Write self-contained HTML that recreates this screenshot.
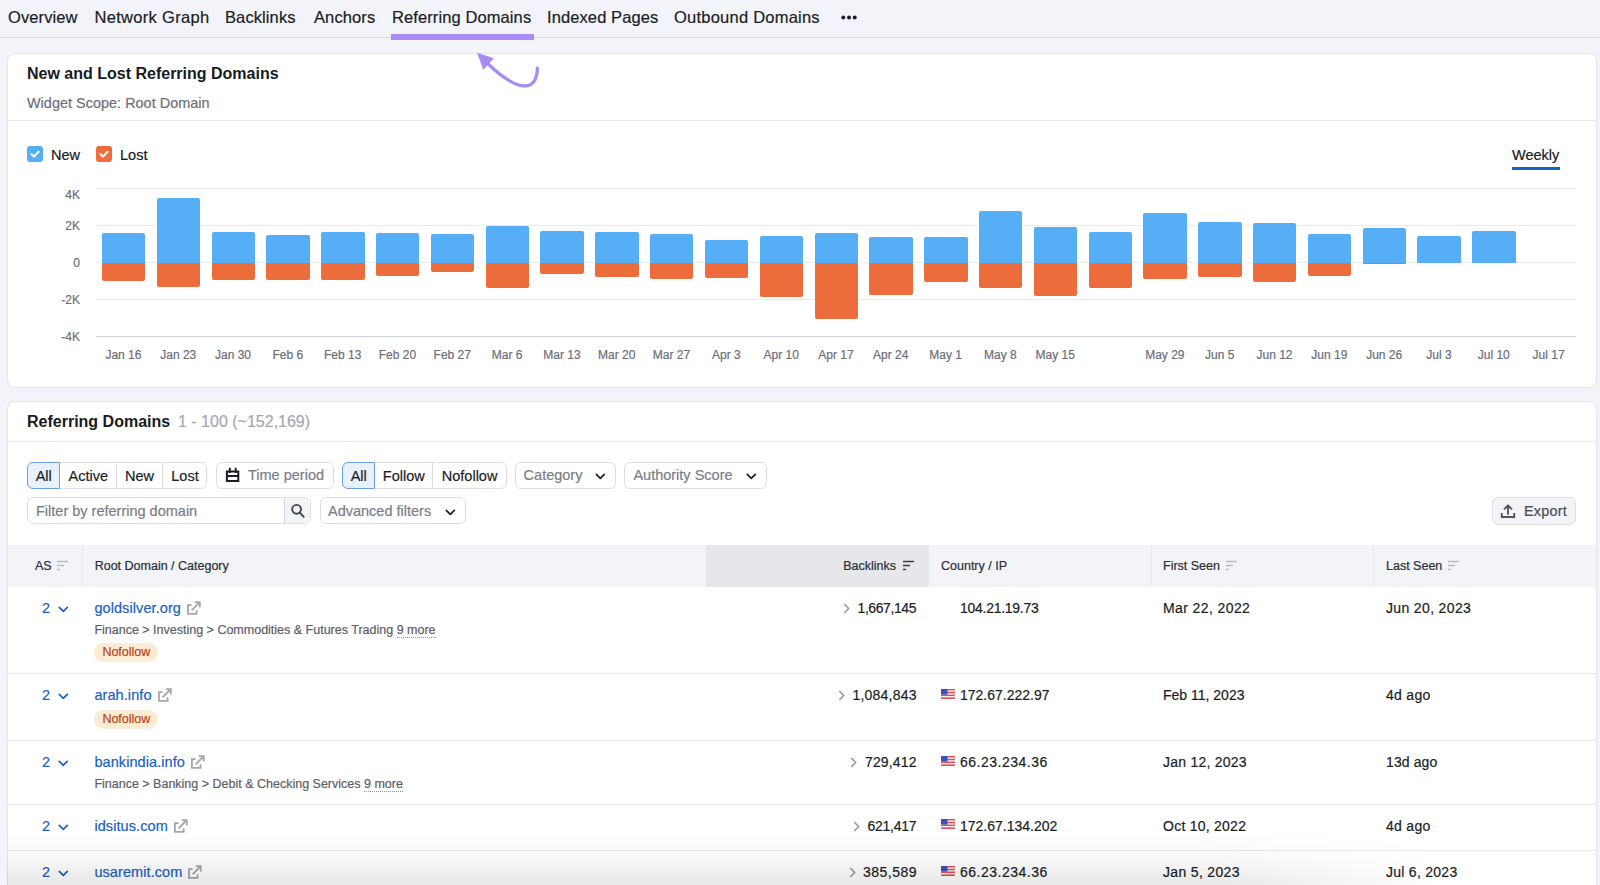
<!DOCTYPE html>
<html><head><meta charset="utf-8">
<style>
*{box-sizing:border-box;margin:0;padding:0}
body{-webkit-text-stroke:0.2px currentColor}html,body{width:1600px;height:885px;overflow:hidden;background:#f3f4f9;font-family:"Liberation Sans",sans-serif;color:#171a22}
.a{position:absolute;white-space:nowrap}
.nav{font-size:16.5px;line-height:20px;top:7px;color:#1b1d24;letter-spacing:0.1px}
.card{position:absolute;background:#fff;border:1px solid #e4e6eb;border-radius:8px}
.ax{font-size:12px;line-height:14px;color:#6c6e79}
.xl{font-size:12px;line-height:14px;color:#6c6e79;text-align:center;width:60px}
.bar{position:absolute;width:43.4px}
.b{background:#56aef6;border-radius:2px 2px 0 0}
.o{background:#ec6c3c;border-radius:0 0 2px 2px}
.grid{position:absolute;left:96px;width:1480px;height:1px;background:#e8eaee}
.btn{position:absolute;height:27px;border:1px solid #dcdee3;border-radius:6px;background:#fff}
.t14{font-size:14px;line-height:17px}
.grey{color:#6c6e79}
.th{font-size:12.5px;line-height:15px;color:#2a2d36;top:559px}
.td{font-size:14px;line-height:17px;color:#1b1d24}
.lnk{font-size:14.5px;line-height:17px;color:#1a5fc4;letter-spacing:0.08px}
.cat{font-size:12.5px;line-height:15px;color:#5b5e68}
.badge{position:absolute;height:19px;border-radius:10px;background:#fdebd3;color:#b8431a;font-size:12.5px;line-height:19px;padding:0 8px}
.rowb{position:absolute;left:7px;width:1590px;height:1px;background:#e6e8ec}
</style></head><body>

<!-- NAV -->
<div class="a nav" style="left:8px">Overview</div>
<div class="a nav" style="left:94.5px;letter-spacing:0.3px">Network Graph</div>
<div class="a nav" style="left:225px">Backlinks</div>
<div class="a nav" style="left:314px">Anchors</div>
<div class="a nav" style="left:392px">Referring Domains</div>
<div class="a nav" style="left:547px">Indexed Pages</div>
<div class="a nav" style="left:674px;letter-spacing:0.23px">Outbound Domains</div>
<div class="a" style="left:841px;top:15px;width:16px;height:5px">
  <svg width="16" height="5" viewBox="0 0 16 5" style="display:block"><circle cx="2.3" cy="2.5" r="2" fill="#1b1d24"/><circle cx="8" cy="2.5" r="2" fill="#1b1d24"/><circle cx="13.7" cy="2.5" r="2" fill="#1b1d24"/></svg>
</div>
<div class="a" style="left:0;top:37px;width:1600px;height:1px;background:#d9dbe1"></div>
<div class="a" style="left:391px;top:34px;width:143px;height:6px;background:#a88bf5"></div>

<!-- CARD 1 -->
<div class="card" style="left:6.5px;top:53px;width:1590.5px;height:335px"></div>
<div class="a" style="left:27px;top:64px;font-size:16px;line-height:19px;font-weight:700;-webkit-text-stroke:0">New and Lost Referring Domains</div>
<div class="a t14 grey" style="left:27px;top:95px;font-size:14.4px;letter-spacing:0.04px">Widget Scope: Root Domain</div>
<div class="a" style="left:8px;top:120px;width:1588px;height:1px;background:#e8eaee"></div>

<!-- arrow -->
<svg class="a" style="left:470px;top:48px" width="80" height="45" viewBox="0 0 80 45">
  <path d="M67.4 18.8 C 67.5 46, 47 44, 16 14" stroke="#a88bf5" stroke-width="3.2" fill="none"/>
  <path d="M7 4.7 L24 10.2 L13.3 21.7 Z" fill="#a88bf5"/>
</svg>

<!-- legend -->
<div class="a" style="left:27px;top:146px;width:16px;height:16px;border-radius:3px;background:#56aef6"></div>
<svg class="a" style="left:27px;top:146px" width="16" height="16"><path d="M4.5 8.2 L7 10.6 L11.6 5.8" stroke="#fff" stroke-width="2" fill="none" stroke-linecap="round" stroke-linejoin="round"/></svg>
<div class="a t14" style="left:51px;top:147px;font-size:14.5px">New</div>
<div class="a" style="left:96px;top:146px;width:16px;height:16px;border-radius:3px;background:#ee6c3d"></div>
<svg class="a" style="left:96px;top:146px" width="16" height="16"><path d="M4.5 8.2 L7 10.6 L11.6 5.8" stroke="#fff" stroke-width="2" fill="none" stroke-linecap="round" stroke-linejoin="round"/></svg>
<div class="a t14" style="left:120px;top:147px;font-size:14.5px">Lost</div>

<div class="a t14" style="left:1512px;top:147px;font-size:14.5px">Weekly</div>
<div class="a" style="left:1512px;top:167px;width:48px;height:3px;background:#1b62c4"></div>

<!-- CHART -->
<div class="grid" style="top:188.0px;background:#e9ebee"></div>
<div class="grid" style="top:225.0px;background:#e9ebee"></div>
<div class="grid" style="top:262.0px;background:#e9ebee"></div>
<div class="grid" style="top:299.0px;background:#e9ebee"></div>
<div class="grid" style="top:336.0px;background:#d0d3d9"></div>
<div class="a ax" style="right:1520px;top:187.6px">4K</div>
<div class="a ax" style="right:1520px;top:219px">2K</div>
<div class="a ax" style="right:1520px;top:255.8px">0</div>
<div class="a ax" style="right:1520px;top:293px">-2K</div>
<div class="a ax" style="right:1520px;top:330px">-4K</div>
<div class="bar b" style="left:101.9px;top:233.25px;height:29.25px"></div>
<div class="bar o" style="left:101.9px;top:262.5px;height:18.0px"></div>
<div class="bar b" style="left:156.72px;top:198px;height:64.5px"></div>
<div class="bar o" style="left:156.72px;top:262.5px;height:24.25px"></div>
<div class="bar b" style="left:211.53px;top:232.25px;height:30.25px"></div>
<div class="bar o" style="left:211.53px;top:262.5px;height:17.0px"></div>
<div class="bar b" style="left:266.35px;top:235px;height:27.5px"></div>
<div class="bar o" style="left:266.35px;top:262.5px;height:17.0px"></div>
<div class="bar b" style="left:321.16px;top:232px;height:30.5px"></div>
<div class="bar o" style="left:321.16px;top:262.5px;height:17.75px"></div>
<div class="bar b" style="left:375.98px;top:233.25px;height:29.25px"></div>
<div class="bar o" style="left:375.98px;top:262.5px;height:13.5px"></div>
<div class="bar b" style="left:430.79px;top:234px;height:28.5px"></div>
<div class="bar o" style="left:430.79px;top:262.5px;height:9.25px"></div>
<div class="bar b" style="left:485.61px;top:226px;height:36.5px"></div>
<div class="bar o" style="left:485.61px;top:262.5px;height:25.25px"></div>
<div class="bar b" style="left:540.42px;top:231.25px;height:31.25px"></div>
<div class="bar o" style="left:540.42px;top:262.5px;height:11.25px"></div>
<div class="bar b" style="left:595.24px;top:232px;height:30.5px"></div>
<div class="bar o" style="left:595.24px;top:262.5px;height:14.25px"></div>
<div class="bar b" style="left:650.05px;top:233.75px;height:28.75px"></div>
<div class="bar o" style="left:650.05px;top:262.5px;height:16.25px"></div>
<div class="bar b" style="left:704.86px;top:240.25px;height:22.25px"></div>
<div class="bar o" style="left:704.86px;top:262.5px;height:15.25px"></div>
<div class="bar b" style="left:759.68px;top:235.75px;height:26.75px"></div>
<div class="bar o" style="left:759.68px;top:262.5px;height:34.75px"></div>
<div class="bar b" style="left:814.5px;top:232.5px;height:30.0px"></div>
<div class="bar o" style="left:814.5px;top:262.5px;height:56.0px"></div>
<div class="bar b" style="left:869.31px;top:237px;height:25.5px"></div>
<div class="bar o" style="left:869.31px;top:262.5px;height:32.0px"></div>
<div class="bar b" style="left:924.12px;top:237px;height:25.5px"></div>
<div class="bar o" style="left:924.12px;top:262.5px;height:19.75px"></div>
<div class="bar b" style="left:978.94px;top:211.25px;height:51.25px"></div>
<div class="bar o" style="left:978.94px;top:262.5px;height:25.75px"></div>
<div class="bar b" style="left:1033.76px;top:227.25px;height:35.25px"></div>
<div class="bar o" style="left:1033.76px;top:262.5px;height:33.0px"></div>
<div class="bar b" style="left:1088.57px;top:231.75px;height:30.75px"></div>
<div class="bar o" style="left:1088.57px;top:262.5px;height:25.0px"></div>
<div class="bar b" style="left:1143.38px;top:213px;height:49.5px"></div>
<div class="bar o" style="left:1143.38px;top:262.5px;height:16.25px"></div>
<div class="bar b" style="left:1198.2px;top:222.25px;height:40.25px"></div>
<div class="bar o" style="left:1198.2px;top:262.5px;height:14.75px"></div>
<div class="bar b" style="left:1253.02px;top:222.75px;height:39.75px"></div>
<div class="bar o" style="left:1253.02px;top:262.5px;height:19.75px"></div>
<div class="bar b" style="left:1307.83px;top:233.5px;height:29.0px"></div>
<div class="bar o" style="left:1307.83px;top:262.5px;height:13.75px"></div>
<div class="bar b" style="left:1362.64px;top:227.5px;height:35.0px"></div>
<div class="bar o" style="left:1362.64px;top:262.5px;height:0.75px"></div>
<div class="bar b" style="left:1417.46px;top:235.5px;height:27.0px"></div>
<div class="bar b" style="left:1472.28px;top:231.25px;height:31.25px"></div>
<div class="a xl" style="left:93.41px;top:348px">Jan 16</div>
<div class="a xl" style="left:148.22px;top:348px">Jan 23</div>
<div class="a xl" style="left:203.04px;top:348px">Jan 30</div>
<div class="a xl" style="left:257.85px;top:348px">Feb 6</div>
<div class="a xl" style="left:312.67px;top:348px">Feb 13</div>
<div class="a xl" style="left:367.48px;top:348px">Feb 20</div>
<div class="a xl" style="left:422.30px;top:348px">Feb 27</div>
<div class="a xl" style="left:477.11px;top:348px">Mar 6</div>
<div class="a xl" style="left:531.93px;top:348px">Mar 13</div>
<div class="a xl" style="left:586.74px;top:348px">Mar 20</div>
<div class="a xl" style="left:641.56px;top:348px">Mar 27</div>
<div class="a xl" style="left:696.37px;top:348px">Apr 3</div>
<div class="a xl" style="left:751.18px;top:348px">Apr 10</div>
<div class="a xl" style="left:806.00px;top:348px">Apr 17</div>
<div class="a xl" style="left:860.81px;top:348px">Apr 24</div>
<div class="a xl" style="left:915.63px;top:348px">May 1</div>
<div class="a xl" style="left:970.44px;top:348px">May 8</div>
<div class="a xl" style="left:1025.26px;top:348px">May 15</div>
<div class="a xl" style="left:1134.89px;top:348px">May 29</div>
<div class="a xl" style="left:1189.70px;top:348px">Jun 5</div>
<div class="a xl" style="left:1244.52px;top:348px">Jun 12</div>
<div class="a xl" style="left:1299.33px;top:348px">Jun 19</div>
<div class="a xl" style="left:1354.15px;top:348px">Jun 26</div>
<div class="a xl" style="left:1408.96px;top:348px">Jul 3</div>
<div class="a xl" style="left:1463.78px;top:348px">Jul 10</div>
<div class="a xl" style="left:1518.59px;top:348px">Jul 17</div>

<!-- CARD 2 -->
<div class="card" style="left:6.5px;top:401px;width:1590.5px;height:600px"></div>
<div class="a" style="left:27px;top:412px;font-size:16px;line-height:19px;font-weight:700;-webkit-text-stroke:0">Referring Domains</div>
<div class="a" style="left:178px;top:412px;font-size:16px;line-height:19px;color:#a6a8b2">1 - 100 (~152,169)</div>
<div class="a" style="left:8px;top:441px;width:1588px;height:1px;background:#e8eaee"></div>

<div class="btn" style="left:27.4px;top:462px;width:180.0px;height:27px"></div>
<div class="a" style="left:27.4px;top:462px;width:33.1px;height:27px;background:#e8f1fd;border:1px solid #6d9fe6;border-radius:6px 0 0 6px"></div>
<div class="a t14" style="left:27.4px;width:32.6px;text-align:center;top:468px;font-size:14.5px;color:#1b1d24">All</div>
<div class="a t14" style="left:60px;width:56.599999999999994px;text-align:center;top:468px;font-size:14.5px;color:#1b1d24">Active</div>
<div class="a" style="left:116.1px;top:463px;width:1px;height:25px;background:#dcdee3"></div>
<div class="a t14" style="left:116.6px;width:46.0px;text-align:center;top:468px;font-size:14.5px;color:#1b1d24">New</div>
<div class="a" style="left:162.1px;top:463px;width:1px;height:25px;background:#dcdee3"></div>
<div class="a t14" style="left:162.6px;width:44.80000000000001px;text-align:center;top:468px;font-size:14.5px;color:#1b1d24">Lost</div>
<div class="btn" style="left:342.4px;top:462px;width:164.20000000000005px;height:27px"></div>
<div class="a" style="left:342.4px;top:462px;width:33.10000000000002px;height:27px;background:#e8f1fd;border:1px solid #6d9fe6;border-radius:6px 0 0 6px"></div>
<div class="a t14" style="left:342.4px;width:32.60000000000002px;text-align:center;top:468px;font-size:14.5px;color:#1b1d24">All</div>
<div class="a t14" style="left:375px;width:57.60000000000002px;text-align:center;top:468px;font-size:14.5px;color:#1b1d24">Follow</div>
<div class="a" style="left:432.1px;top:463px;width:1px;height:25px;background:#dcdee3"></div>
<div class="a t14" style="left:432.6px;width:74.0px;text-align:center;top:468px;font-size:14.5px;color:#1b1d24">Nofollow</div>
<div class="btn" style="left:216px;top:462px;width:118px"></div>
<svg class="a" style="left:224.5px;top:467px;display:block" width="15" height="16" viewBox="0 0 15 16"><path d="M1.9 4.5H13.3V13.9H1.9Z M1.9 9H13.3" stroke="#1b1d24" stroke-width="2" fill="none"/><path d="M4.8 0.7V6 M10.7 0.7V6" stroke="#1b1d24" stroke-width="1.9"/></svg>
<div class="a t14" style="left:248px;top:467px;font-size:14.5px;color:#7a7d88">Time period</div>
<div class="btn" style="left:515px;top:462px;width:101.4px"></div>
<div class="a t14" style="left:523.6px;top:467px;font-size:14.5px;color:#7a7d88">Category</div>
<svg class="a" style="left:595px;top:473px;display:block" width="11" height="7" viewBox="0 0 11 7"><path d="M1.3 1.3 L5.3 5.3 L9.3 1.3" stroke="#1b1d24" stroke-width="1.7" fill="none" stroke-linecap="round" stroke-linejoin="round"/></svg>
<div class="btn" style="left:624.4px;top:462px;width:142.2px"></div>
<div class="a t14" style="left:633.4px;top:467px;font-size:14.5px;color:#7a7d88">Authority Score</div>
<svg class="a" style="left:745.5px;top:473px;display:block" width="11" height="7" viewBox="0 0 11 7"><path d="M1.3 1.3 L5.3 5.3 L9.3 1.3" stroke="#1b1d24" stroke-width="1.7" fill="none" stroke-linecap="round" stroke-linejoin="round"/></svg>
<div class="btn" style="left:27.4px;top:497px;width:283.6px"></div>
<div class="a" style="left:284px;top:498px;width:26px;height:25px;background:#f3f4f7;border-left:1px solid #d6d8de;border-radius:0 6px 6px 0"></div>
<svg class="a" style="left:290px;top:502px;display:block" width="16" height="17" viewBox="0 0 16 17"><circle cx="6.6" cy="7.3" r="4.4" stroke="#454852" stroke-width="1.9" fill="none"/><path d="M9.9 10.6 L13.7 14.8" stroke="#454852" stroke-width="2" stroke-linecap="round"/></svg>
<div class="a t14" style="left:36px;top:502.5px;font-size:14.5px;color:#7a7d88">Filter by referring domain</div>
<div class="btn" style="left:319.6px;top:497px;width:146.4px"></div>
<div class="a t14" style="left:328px;top:502.5px;font-size:14.5px;color:#7a7d88">Advanced filters</div>
<svg class="a" style="left:444.5px;top:508.5px;display:block" width="11" height="7" viewBox="0 0 11 7"><path d="M1.3 1.3 L5.3 5.3 L9.3 1.3" stroke="#1b1d24" stroke-width="1.7" fill="none" stroke-linecap="round" stroke-linejoin="round"/></svg>
<div class="btn" style="left:1492px;top:497px;width:84px;height:28px;background:#f3f4f7"></div>
<svg class="a" style="left:1500px;top:503px;display:block" width="16" height="16" viewBox="0 0 16 16"><path d="M8 11V2.5 M4.5 5.8 L8 2.3 L11.5 5.8" stroke="#50535d" stroke-width="1.9" fill="none" stroke-linecap="round" stroke-linejoin="round"/><path d="M1.8 10v4h12.4v-4" stroke="#50535d" stroke-width="1.9" fill="none"/></svg>
<div class="a t14" style="left:1524px;top:502.5px;font-size:14.5px;color:#4a4d57;letter-spacing:0.15px">Export</div>
<div class="a" style="left:8px;top:545px;width:1588px;height:42px;background:#f3f4f7"></div>
<div class="a" style="left:706px;top:545px;width:223px;height:42px;background:#e6e7ea"></div>
<div class="a" style="left:82px;top:545px;width:1px;height:42px;background:#e6e7ea"></div>
<div class="a" style="left:1151px;top:545px;width:1px;height:42px;background:#e6e7ea"></div>
<div class="a" style="left:1373px;top:545px;width:1px;height:42px;background:#e6e7ea"></div>
<div class="a th" style="left:35px">AS</div>
<svg class="a" style="left:56px;top:560px;display:block" width="13" height="11" viewBox="0 0 13 11"><path d="M1 1.5h11 M1 5.5h7 M1 9.5h3" stroke="#b9bbc3" stroke-width="1.6"/></svg>
<div class="a th" style="left:94.7px">Root Domain / Category</div>
<div class="a th" style="right:704px">Backlinks</div>
<svg class="a" style="left:902px;top:560px;display:block" width="13" height="11" viewBox="0 0 13 11"><path d="M1 1.5h11 M1 5.5h7 M1 9.5h3" stroke="#3c3f48" stroke-width="1.6"/></svg>
<div class="a th" style="left:941px">Country / IP</div>
<div class="a th" style="left:1163px">First Seen</div>
<svg class="a" style="left:1225px;top:560px;display:block" width="13" height="11" viewBox="0 0 13 11"><path d="M1 1.5h11 M1 5.5h7 M1 9.5h3" stroke="#b9bbc3" stroke-width="1.6"/></svg>
<div class="a th" style="left:1386px">Last Seen</div>
<svg class="a" style="left:1447px;top:560px;display:block" width="13" height="11" viewBox="0 0 13 11"><path d="M1 1.5h11 M1 5.5h7 M1 9.5h3" stroke="#b9bbc3" stroke-width="1.6"/></svg>
<div class="a lnk" style="left:42px;top:600.0px">2</div>
<svg class="a" style="left:57.5px;top:606.0px;display:block" width="11" height="7" viewBox="0 0 11 7"><path d="M1.3 1.3 L5.3 5.3 L9.3 1.3" stroke="#1a5fc4" stroke-width="1.7" fill="none" stroke-linecap="round" stroke-linejoin="round"/></svg>
<div class="a lnk" style="left:94.4px;top:600.0px">goldsilver.org</div>
<div class="a lnk" style="left:94.4px;top:600.0px;display:flex;align-items:flex-start"><span style="visibility:hidden">goldsilver.org</span><svg style="display:block;margin-left:5px;margin-top:0px" width="15" height="15" viewBox="0 0 15 15"><path d="M5.6 5.1H1.9V13.8H10.6V10.3" stroke="#a3a6b0" stroke-width="1.8" fill="none"/><path d="M5.6 10.3L13.4 2.5" stroke="#a3a6b0" stroke-width="1.8" fill="none"/><path d="M8.9 2.2H13.8V7.4" stroke="#a3a6b0" stroke-width="1.8" fill="none"/></svg></div>
<div class="a cat" style="left:94.4px;top:622.5px">Finance &gt; Investing &gt; Commodities &amp; Futures Trading <span style="border-bottom:1px dotted #8f929c">9 more</span></div>
<div class="badge" style="left:94.4px;top:642.5px">Nofollow</div>
<div class="a td" style="right:683.5px;top:600.0px;display:flex;align-items:center"><svg style="display:block;margin-right:7.5px" width="7" height="11" viewBox="0 0 7 11"><path d="M1.3 1 L5.6 5.5 L1.3 10" stroke="#9a9cae" stroke-width="1.7" fill="none"/></svg><span style="letter-spacing:-0.41px;margin-right:0.41px">1,667,145</span></div>
<div class="a td" style="left:960px;top:600.0px;letter-spacing:-0.27px">104.21.19.73</div>
<div class="a td" style="left:1163px;top:600.0px;letter-spacing:0.4px">Mar 22, 2022</div>
<div class="a td" style="left:1386px;top:600.0px;letter-spacing:0.35px">Jun 20, 2023</div>
<div class="rowb" style="top:673px"></div>
<div class="a lnk" style="left:42px;top:687.0px">2</div>
<svg class="a" style="left:57.5px;top:693.0px;display:block" width="11" height="7" viewBox="0 0 11 7"><path d="M1.3 1.3 L5.3 5.3 L9.3 1.3" stroke="#1a5fc4" stroke-width="1.7" fill="none" stroke-linecap="round" stroke-linejoin="round"/></svg>
<div class="a lnk" style="left:94.4px;top:687.0px">arah.info</div>
<div class="a lnk" style="left:94.4px;top:687.0px;display:flex;align-items:flex-start"><span style="visibility:hidden">arah.info</span><svg style="display:block;margin-left:5px;margin-top:0px" width="15" height="15" viewBox="0 0 15 15"><path d="M5.6 5.1H1.9V13.8H10.6V10.3" stroke="#a3a6b0" stroke-width="1.8" fill="none"/><path d="M5.6 10.3L13.4 2.5" stroke="#a3a6b0" stroke-width="1.8" fill="none"/><path d="M8.9 2.2H13.8V7.4" stroke="#a3a6b0" stroke-width="1.8" fill="none"/></svg></div>
<div class="badge" style="left:94.4px;top:709.5px">Nofollow</div>
<div class="a td" style="right:683.5px;top:687.0px;display:flex;align-items:center"><svg style="display:block;margin-right:7.5px" width="7" height="11" viewBox="0 0 7 11"><path d="M1.3 1 L5.6 5.5 L1.3 10" stroke="#9a9cae" stroke-width="1.7" fill="none"/></svg><span style="letter-spacing:0.21px;margin-right:-0.21px">1,084,843</span></div>
<svg class="a" style="left:941px;top:688.5px;display:block" width="14" height="10" viewBox="0 0 14 10"><rect width="14" height="10" fill="#f0f0f0"/><rect y="0" width="14" height="1.4" fill="#e0505a"/><rect y="2.8" width="14" height="1.4" fill="#e0505a"/><rect y="5.6" width="14" height="1.4" fill="#e0505a"/><rect y="8.4" width="14" height="1.6" fill="#e0505a"/><rect width="6.5" height="5.6" fill="#3d52b8"/></svg>
<div class="a td" style="left:960px;top:687.0px;letter-spacing:0px">172.67.222.97</div>
<div class="a td" style="left:1163px;top:687.0px;letter-spacing:0px">Feb 11, 2023</div>
<div class="a td" style="left:1386px;top:687.0px;letter-spacing:0.3px">4d ago</div>
<div class="rowb" style="top:740px"></div>
<div class="a lnk" style="left:42px;top:754.0px">2</div>
<svg class="a" style="left:57.5px;top:760.0px;display:block" width="11" height="7" viewBox="0 0 11 7"><path d="M1.3 1.3 L5.3 5.3 L9.3 1.3" stroke="#1a5fc4" stroke-width="1.7" fill="none" stroke-linecap="round" stroke-linejoin="round"/></svg>
<div class="a lnk" style="left:94.4px;top:754.0px">bankindia.info</div>
<div class="a lnk" style="left:94.4px;top:754.0px;display:flex;align-items:flex-start"><span style="visibility:hidden">bankindia.info</span><svg style="display:block;margin-left:5px;margin-top:0px" width="15" height="15" viewBox="0 0 15 15"><path d="M5.6 5.1H1.9V13.8H10.6V10.3" stroke="#a3a6b0" stroke-width="1.8" fill="none"/><path d="M5.6 10.3L13.4 2.5" stroke="#a3a6b0" stroke-width="1.8" fill="none"/><path d="M8.9 2.2H13.8V7.4" stroke="#a3a6b0" stroke-width="1.8" fill="none"/></svg></div>
<div class="a cat" style="left:94.4px;top:776.5px">Finance &gt; Banking &gt; Debit &amp; Checking Services <span style="border-bottom:1px dotted #8f929c">9 more</span></div>
<div class="a td" style="right:683.5px;top:754.0px;display:flex;align-items:center"><svg style="display:block;margin-right:7.5px" width="7" height="11" viewBox="0 0 7 11"><path d="M1.3 1 L5.6 5.5 L1.3 10" stroke="#9a9cae" stroke-width="1.7" fill="none"/></svg><span style="letter-spacing:0.15px;margin-right:-0.15px">729,412</span></div>
<svg class="a" style="left:941px;top:755.5px;display:block" width="14" height="10" viewBox="0 0 14 10"><rect width="14" height="10" fill="#f0f0f0"/><rect y="0" width="14" height="1.4" fill="#e0505a"/><rect y="2.8" width="14" height="1.4" fill="#e0505a"/><rect y="5.6" width="14" height="1.4" fill="#e0505a"/><rect y="8.4" width="14" height="1.6" fill="#e0505a"/><rect width="6.5" height="5.6" fill="#3d52b8"/></svg>
<div class="a td" style="left:960px;top:754.0px;letter-spacing:0.5px">66.23.234.36</div>
<div class="a td" style="left:1163px;top:754.0px;letter-spacing:0.23px">Jan 12, 2023</div>
<div class="a td" style="left:1386px;top:754.0px;letter-spacing:0.1px">13d ago</div>
<div class="rowb" style="top:804px"></div>
<div class="a lnk" style="left:42px;top:817.5px">2</div>
<svg class="a" style="left:57.5px;top:823.5px;display:block" width="11" height="7" viewBox="0 0 11 7"><path d="M1.3 1.3 L5.3 5.3 L9.3 1.3" stroke="#1a5fc4" stroke-width="1.7" fill="none" stroke-linecap="round" stroke-linejoin="round"/></svg>
<div class="a lnk" style="left:94.4px;top:817.5px">idsitus.com</div>
<div class="a lnk" style="left:94.4px;top:817.5px;display:flex;align-items:flex-start"><span style="visibility:hidden">idsitus.com</span><svg style="display:block;margin-left:5px;margin-top:0px" width="15" height="15" viewBox="0 0 15 15"><path d="M5.6 5.1H1.9V13.8H10.6V10.3" stroke="#a3a6b0" stroke-width="1.8" fill="none"/><path d="M5.6 10.3L13.4 2.5" stroke="#a3a6b0" stroke-width="1.8" fill="none"/><path d="M8.9 2.2H13.8V7.4" stroke="#a3a6b0" stroke-width="1.8" fill="none"/></svg></div>
<div class="a td" style="right:683.5px;top:817.5px;display:flex;align-items:center"><svg style="display:block;margin-right:7.5px" width="7" height="11" viewBox="0 0 7 11"><path d="M1.3 1 L5.6 5.5 L1.3 10" stroke="#9a9cae" stroke-width="1.7" fill="none"/></svg><span style="letter-spacing:-0.27px;margin-right:0.27px">621,417</span></div>
<svg class="a" style="left:941px;top:819px;display:block" width="14" height="10" viewBox="0 0 14 10"><rect width="14" height="10" fill="#f0f0f0"/><rect y="0" width="14" height="1.4" fill="#e0505a"/><rect y="2.8" width="14" height="1.4" fill="#e0505a"/><rect y="5.6" width="14" height="1.4" fill="#e0505a"/><rect y="8.4" width="14" height="1.6" fill="#e0505a"/><rect width="6.5" height="5.6" fill="#3d52b8"/></svg>
<div class="a td" style="left:960px;top:817.5px;letter-spacing:0px">172.67.134.202</div>
<div class="a td" style="left:1163px;top:817.5px;letter-spacing:0.25px">Oct 10, 2022</div>
<div class="a td" style="left:1386px;top:817.5px;letter-spacing:0.3px">4d ago</div>
<div class="rowb" style="top:850px"></div>
<div class="a lnk" style="left:42px;top:864.0px">2</div>
<svg class="a" style="left:57.5px;top:870.0px;display:block" width="11" height="7" viewBox="0 0 11 7"><path d="M1.3 1.3 L5.3 5.3 L9.3 1.3" stroke="#1a5fc4" stroke-width="1.7" fill="none" stroke-linecap="round" stroke-linejoin="round"/></svg>
<div class="a lnk" style="left:94.4px;top:864.0px">usaremit.com</div>
<div class="a lnk" style="left:94.4px;top:864.0px;display:flex;align-items:flex-start"><span style="visibility:hidden">usaremit.com</span><svg style="display:block;margin-left:5px;margin-top:0px" width="15" height="15" viewBox="0 0 15 15"><path d="M5.6 5.1H1.9V13.8H10.6V10.3" stroke="#a3a6b0" stroke-width="1.8" fill="none"/><path d="M5.6 10.3L13.4 2.5" stroke="#a3a6b0" stroke-width="1.8" fill="none"/><path d="M8.9 2.2H13.8V7.4" stroke="#a3a6b0" stroke-width="1.8" fill="none"/></svg></div>
<div class="a td" style="right:683.5px;top:864.0px;display:flex;align-items:center"><svg style="display:block;margin-right:7.5px" width="7" height="11" viewBox="0 0 7 11"><path d="M1.3 1 L5.6 5.5 L1.3 10" stroke="#9a9cae" stroke-width="1.7" fill="none"/></svg><span style="letter-spacing:0.48px;margin-right:-0.48px">385,589</span></div>
<svg class="a" style="left:941px;top:865.5px;display:block" width="14" height="10" viewBox="0 0 14 10"><rect width="14" height="10" fill="#f0f0f0"/><rect y="0" width="14" height="1.4" fill="#e0505a"/><rect y="2.8" width="14" height="1.4" fill="#e0505a"/><rect y="5.6" width="14" height="1.4" fill="#e0505a"/><rect y="8.4" width="14" height="1.6" fill="#e0505a"/><rect width="6.5" height="5.6" fill="#3d52b8"/></svg>
<div class="a td" style="left:960px;top:864.0px;letter-spacing:0.5px">66.23.234.36</div>
<div class="a td" style="left:1163px;top:864.0px;letter-spacing:0.33px">Jan 5, 2023</div>
<div class="a td" style="left:1386px;top:864.0px;letter-spacing:0.27px">Jul 6, 2023</div>
<div class="a" style="left:7px;top:826px;width:1589px;height:59px;background:linear-gradient(to bottom, rgba(0,0,0,0) 0%, rgba(0,0,0,0.012) 35%, rgba(0,0,0,0.035) 60%, rgba(0,0,0,0.095) 100%);-webkit-mask-image:linear-gradient(to right, #000 0%, #000 76%, transparent 90%)"></div>

</body></html>
